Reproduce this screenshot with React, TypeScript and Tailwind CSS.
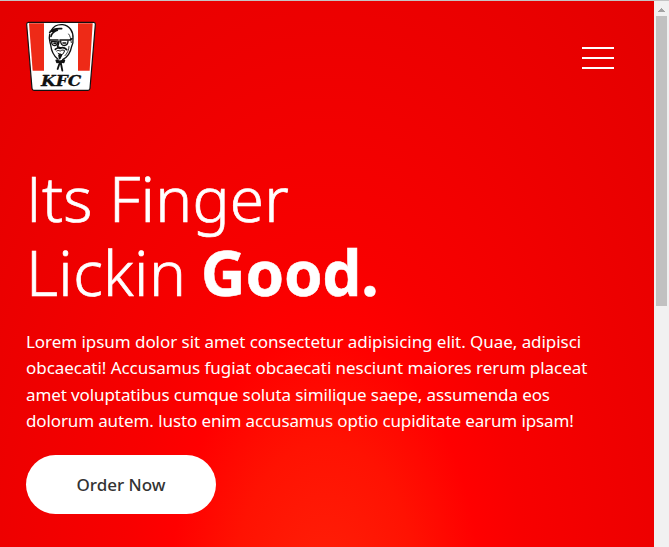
function Logo() {
  return (
    <svg viewBox="30 27 210 213" className="block h-[71px] w-[70px]" aria-label="KFC">
      <path d="M37 31H233Q238 31 238 37L222 229Q221 235 216 235H54Q49 235 48 229L32 37Q32 31 37 31Z" fill="#fff" stroke="#111" strokeWidth="3.5" />
      <path d="M39 34H84V176H50Z" fill="#ee2a17" />
      <path d="M186 34H230L221 176H186Z" fill="#ee2a17" />
      <g fill="none" stroke="#111" strokeWidth="4" strokeLinecap="round" strokeLinejoin="round">
        <path d="M106 55C114 40 128 37 140 38C161 41 172 58 171 79C172 89 169 99 167 103C163 125 151 137 140 143" />
        <path d="M101 62C108 51 122 49 137 50M103 58L124 55C114 59 107 65 105 73" strokeWidth="5" />
        <path d="M101 67C97 80 102 88 104 99C106 117 116 134 126 142" />
        <path d="M158 66C163 72 164 80 166 92" strokeWidth="2.5" />
        <path d="M103 84H126M132 84H162L168 80" strokeWidth="5" />
        <path d="M107 88C105 103 124 106 126 90ZM134 87C133 105 156 105 156 87" />
        <path d="M114 94H120M141 93H149" strokeWidth="5" />
        <path d="M129 88L125 104L132 107M118 112C124 105 130 109 133 109C140 105 148 109 152 113" strokeWidth="5" />
        <path d="M122 117C127 113 130 117 133 117C139 112 143 115 146 116L142 125C137 130 130 128 126 124" strokeWidth="3" />
        <path d="M132 126V139M129 130L131 140L136 130" strokeWidth="5" />
        <path d="M159 103C159 115 153 125 147 131" strokeWidth="2.5" />
        <path d="M121 145L131 148L145 145L143 151L132 149L123 151ZM132 150L125 171M134 150L139 176" strokeWidth="5.5" />
      </g>
      <text x="75" y="223" textLength="121" lengthAdjust="spacingAndGlyphs" className="font-['DejaVu_Serif',serif] text-[47px] font-bold italic" fill="#111" stroke="#111" strokeWidth="0.8">KFC</text>
    </svg>
  );
}

function Scrollbar() {
  return (
    <div className="flex w-[15px] shrink-0 flex-col items-center bg-[#f1f1f1]">
      <div className="flex h-[15px] items-center justify-center">
        <svg viewBox="0 0 7 4" className="mt-0.5 h-1 w-[7px]" shapeRendering="crispEdges">
          <path d="M3 0H4V1H5V2H6V3H7V4H0V3H1V2H2V1H3Z" fill="#a3a3a3" />
        </svg>
      </div>
      <div className="h-[290px] w-[11px] bg-[#c1c1c1]" />
    </div>
  );
}

export default function App() {
  return (
    <div className="flex h-[547px] w-[669px] overflow-hidden border-t border-[#c4c4c4] font-['Noto_Sans',sans-serif]">
      <main className="flex w-[654px] flex-col bg-[radial-gradient(ellipse_420px_720px_at_325px_600px,#ff2108_0%,#ff1202_22%,#ff0000_37%,#f80000_48%,#ee0000_78%,#e40000_112%)] pl-[26px] text-white">
        <header className="flex items-center justify-between pt-5 pr-10">
          <Logo />
          <button className="mt-0.5 flex flex-col gap-2" aria-label="Menu">
            <span className="h-0.5 w-8 bg-white" />
            <span className="h-0.5 w-8 bg-white" />
            <span className="h-0.5 w-8 bg-white" />
          </button>
        </header>
        <h1 className="mt-[69px] text-[62px] leading-[74px] font-light whitespace-nowrap">
          <span className="block h-[74px] tracking-[0.25px] [-webkit-text-stroke:0.7px_white]">
            <span className="font-['Open_Sans']">I</span>ts Finger
          </span>
          <span className="block h-[74px]">
            <span className="tracking-[0.4px] [-webkit-text-stroke:0.7px_white]">Lickin </span>
            <strong className="-ml-0.5 font-bold tracking-[-0.3px] [-webkit-text-stroke:0.5px_white]">Good.</strong>
          </span>
        </h1>
        <p className="mt-[20px] text-[17px] leading-[26.4px] whitespace-nowrap">
          <span className="block tracking-[-0.05px]">Lorem ipsum dolor sit amet consectetur adipisicing elit. Quae, adipisci</span>
          <span className="block tracking-[-0.05px]">obcaecati! Accusamus fugiat obcaecati nesciunt maiores rerum placeat</span>
          <span className="block tracking-[-0.1px]">amet voluptatibus cumque soluta similique saepe, assumenda eos</span>
          <span className="block tracking-[-0.13px]">dolorum autem. <span className="font-['Open_Sans']">I</span>usto enim accusamus optio cupiditate earum ipsam!</span>
        </p>
        <button className="mt-[20px] h-[59px] w-[190px] rounded-full bg-white pt-0.5 text-[17px] font-medium text-[#333]">
          Order Now
        </button>
      </main>
      <Scrollbar />
    </div>
  );
}
